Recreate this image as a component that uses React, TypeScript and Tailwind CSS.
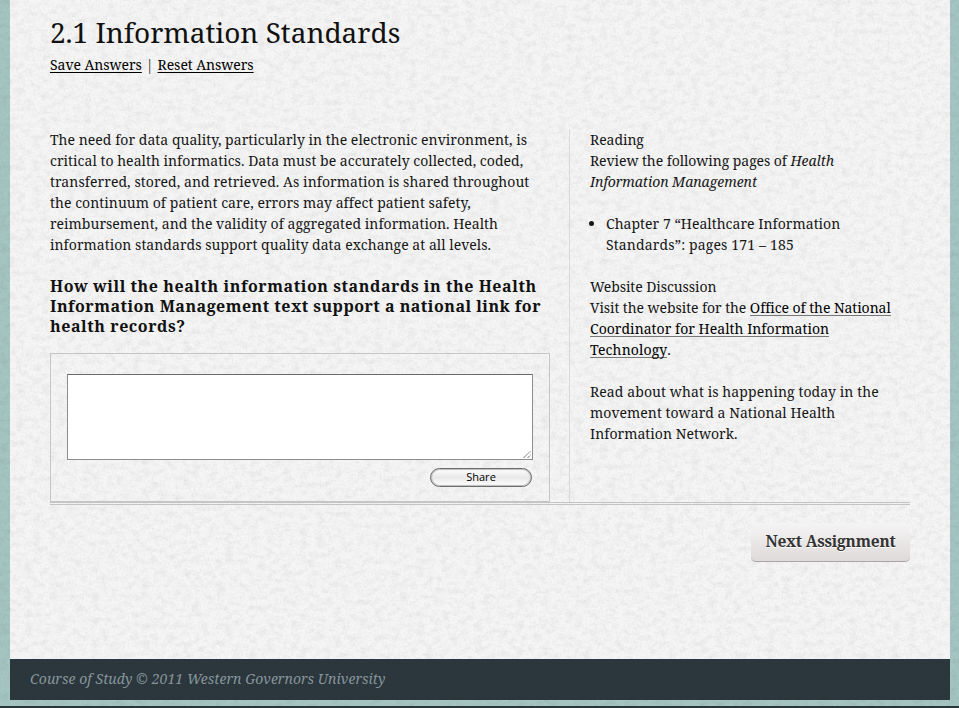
import React from "react";

function PaperTexture() {
  return (
    <svg className="pointer-events-none absolute inset-0 h-full w-full" aria-hidden="true">
      <filter id="fibres" x="0" y="0" width="100%" height="100%" colorInterpolationFilters="sRGB">
        <feTurbulence type="fractalNoise" baseFrequency="0.12 0.17" numOctaves="4" seed="8" />
        <feColorMatrix
          type="matrix"
          values="0 0 0 0 0  0 0 0 0 0  0 0 0 0 0  0.11 0 0 0 -0.045"
        />
      </filter>
      <filter id="grain" x="0" y="0" width="100%" height="100%" colorInterpolationFilters="sRGB">
        <feTurbulence type="fractalNoise" baseFrequency="0.5" numOctaves="2" seed="3" />
        <feColorMatrix
          type="matrix"
          values="0 0 0 0 0  0 0 0 0 0  0 0 0 0 0  0.09 0 0 0 -0.035"
        />
      </filter>
      <rect width="100%" height="100%" filter="url(#fibres)" />
      <rect width="100%" height="100%" filter="url(#grain)" />
    </svg>
  );
}

function Lines({ children }: { children: React.ReactNode }) {
  return (
    <>
      {React.Children.map(children, (line) => (
        <span className="block whitespace-nowrap">{line}</span>
      ))}
    </>
  );
}

function SourceLink({ children }: { children: React.ReactNode }) {
  return (
    <a href="#" className="border-b border-[#777] bg-none text-black [display:inline-block] h-[19px] align-top">
      {children}
    </a>
  );
}

function AnswerBox() {
  return (
    <div className="mt-[17px] h-[149px] w-[500px] border border-[#c6c6c6] px-4 pt-5">
      <textarea
        aria-label="Answer"
        className="block h-[86px] w-[466px] resize-none border border-[#8d8d8d] border-t-[#6a6a6a] bg-white outline-none"
      />
      <svg className="relative -mt-[9px] ml-[456px] block" width="9" height="8" stroke="#555" strokeWidth="1" fill="none">
        <path d="M0.5 7 L7.5 0 M4.5 7 L7.5 4" strokeDasharray="1.2 0.4" />
      </svg>
      <button className="mt-[9px] ml-[363px] block h-[19px] w-[102px] rounded-full border border-[#6c6c6c] bg-linear-to-b from-white from-0% via-[#e9e9e9] via-50% to-white text-center font-['Open_Sans','Noto_Sans',sans-serif] text-[11px] leading-[15px] text-black shadow-[inset_0_0_1px_1px_#bbb]">
        <span className="block h-[17px] leading-[16px]">Share</span>
      </button>
    </div>
  );
}

export default function App() {
  return (
    <div className="relative h-[708px] w-[959px] overflow-hidden bg-[#a6c6c4] font-['Noto_Serif','DejaVu_Serif',serif] text-[14px] leading-[21px] tracking-[0.035px] text-[#161616]">
      <div className="mr-[9px] ml-[10px] h-[659px] w-[940px] bg-[#f6f6f6] px-10 pt-[11px]">
        <PaperTexture />
        <div className="relative">
          <h1 className="text-[28px] leading-[42px] tracking-[-0.03px] text-[#111]">2.1 Information Standards</h1>
          <p className="mt-px tracking-[-0.05px] text-black">
            <a href="#" className="underline underline-offset-2">Save Answers</a>
            <span className="tracking-[0.2px] text-[#333]"> | </span>
            <a href="#" className="underline underline-offset-2">Reset Answers</a>
          </p>

          <main className="mt-[54px] flex h-[374px] border-b border-[#c4c4c4]">
            <section className="w-[519px]">
              <p>
                <Lines>
                  <>The need for data quality, particularly in the electronic environment, is</>
                  <>critical to health informatics. Data must be accurately collected, coded,</>
                  <span className="tracking-[0.065px]">transferred, stored, and retrieved. As information is shared throughout</span>
                  <span className="tracking-[0.05px]">the continuum of patient care, errors may affect patient safety,</span>
                  <span className="tracking-[0.02px]">reimbursement, and the validity of aggregated information. Health</span>
                  <>information standards support quality data exchange at all levels.</>
                </Lines>
              </p>
              <h2 className="mt-[21px] text-[16px] leading-[20px] font-bold tracking-[0.5px] text-[#111]">
                <Lines>
                  <span className="tracking-[0.555px]">How will the health information standards in the Health</span>
                  <span className="tracking-[0.475px]">Information Management text support a national link for</span>
                  <span className="tracking-[0.55px]">health records?</span>
                </Lines>
              </h2>
              <AnswerBox />
            </section>

            <aside className="w-[341px] border-l border-[#d9d9d9] pl-5">
              <p>
                <Lines>
                  <span className="tracking-[-0.05px]">Reading</span>
                  <span className="tracking-[-0.065px]">Review the following pages of <em>Health</em></span>
                  <em className="tracking-[-0.05px]">Information Management</em>
                </Lines>
              </p>
              <ul className="mt-[21px] list-disc pl-4">
                <li>
                  <Lines>
                    <>Chapter 7 “Healthcare Information</>
                    <span className="tracking-[0.14px]">Standards”: pages 171 – 185</span>
                  </Lines>
                </li>
              </ul>
              <p className="mt-[21px]">
                <Lines>
                  <span className="tracking-[-0.075px]">Website Discussion</span>
                  <span className="tracking-[-0.07px]">Visit the website for the <SourceLink>Office of the National</SourceLink></span>
                  <SourceLink>Coordinator for Health Information</SourceLink>
                  <span className="tracking-[0.12px]"><SourceLink>Technology</SourceLink>.</span>
                </Lines>
              </p>
              <p className="mt-[21px]">
                <Lines>
                  <span className="tracking-[0.09px]">Read about what is happening today in the</span>
                  <>movement toward a National Health</>
                  <>Information Network.</>
                </Lines>
              </p>
            </aside>
          </main>

          <div className="mt-px border-t border-[#c4c4c4]" />
          <div className="mt-[18px] flex justify-end">
            <button className="h-[39px] w-[159px] rounded-[5px] border-b border-[#aaa5a5] bg-linear-to-b from-[#f5f4f4] to-[#dfdada] pb-[2px] text-[15.5px] font-bold tracking-[-0.2px] text-[#333] [text-shadow:0_1px_0_#fff]">
              Next Assignment
            </button>
          </div>
        </div>
      </div>
      <footer className="relative mr-[9px] ml-[10px] h-[41px] bg-[#2b363d] pl-5 leading-[40px] tracking-[0.055px] text-[#87959a] italic">
        Course of Study © 2011 Western Governors University
      </footer>
      <div className="relative mt-[6px] h-[2px] bg-[#2b363a]" />
    </div>
  );
}
